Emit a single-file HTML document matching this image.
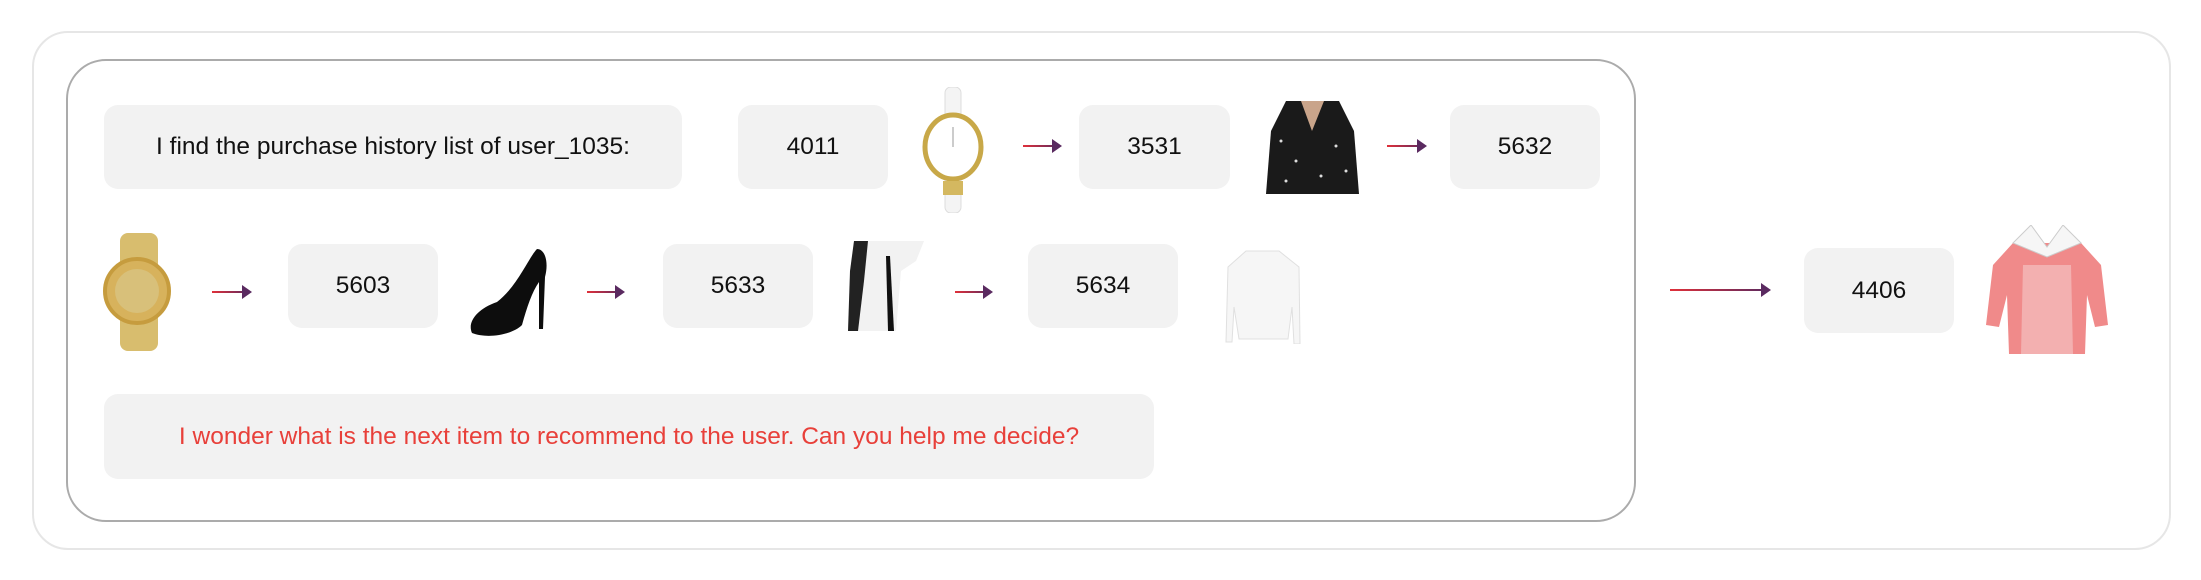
<!DOCTYPE html>
<html><head><meta charset="utf-8"><style>
body{margin:0;width:2201px;height:580px;background:#fff;position:relative;overflow:hidden;font-family:"Liberation Sans",sans-serif}
.a{position:absolute}
.outer{left:32px;top:31px;width:2139px;height:519px;border:2px solid #e6e6e6;border-radius:36px;box-sizing:border-box}
.inner{left:66px;top:59px;width:1570px;height:463px;border:2px solid #ababab;border-radius:40px;box-sizing:border-box}
.b{position:absolute;background:#f2f2f2;border-radius:14px;display:flex;align-items:center;justify-content:center;font-size:24.5px;color:#111}
.ar{position:absolute;height:2px;background:linear-gradient(90deg,#e0303a,#5a2a60)}
.ar:after{content:"";position:absolute;right:-2px;top:-6px;border-left:10px solid #5a2a60;border-top:7px solid transparent;border-bottom:7px solid transparent}
</style></head><body>
<div class="a outer"></div>
<div class="a inner"></div>
<div class="b" style="left:104px;top:105px;width:578px;height:84px">I find the purchase history list of user_1035:</div>
<div class="b" style="left:738px;top:105px;width:150px;height:84px">4011</div>
<svg class="a" style="left:919px;top:87px" width="68" height="126"><rect x="26" y="0" width="16" height="126" rx="6" fill="#f4f4f4" stroke="#ddd"/><ellipse cx="34" cy="60" rx="28" ry="32" fill="#fff" stroke="#c8a848" stroke-width="5"/><line x1="34" y1="60" x2="34" y2="40" stroke="#999"/><rect x="24" y="94" width="20" height="14" fill="#d4b860"/></svg>
<div class="ar" style="left:1023px;top:145px;width:37px"></div>
<div class="b" style="left:1079px;top:105px;width:151px;height:84px">3531</div>
<svg class="a" style="left:1266px;top:101px" width="93" height="93"><path d="M20 0 L73 0 L88 30 L93 93 L0 93 L5 30Z" fill="#1a1a1a"/><path d="M35 0 L46 30 L58 0Z" fill="#c9a48a"/><g fill="#ddd"><circle cx="15" cy="40" r="1.5"/><circle cx="30" cy="60" r="1.5"/><circle cx="70" cy="45" r="1.5"/><circle cx="80" cy="70" r="1.5"/><circle cx="20" cy="80" r="1.5"/><circle cx="55" cy="75" r="1.5"/></g></svg>
<div class="ar" style="left:1387px;top:145px;width:38px"></div>
<div class="b" style="left:1450px;top:105px;width:150px;height:84px">5632</div>

<svg class="a" style="left:102px;top:233px" width="73" height="118"><rect x="18" y="0" width="38" height="118" rx="8" fill="#d8bd6e"/><circle cx="35" cy="58" r="32" fill="#d7b25c" stroke="#c69c3e" stroke-width="4"/><circle cx="35" cy="58" r="22" fill="#d8c07a"/></svg>
<div class="ar" style="left:212px;top:291px;width:38px"></div>
<div class="b" style="left:288px;top:244px;width:150px;height:84px">5603</div>
<svg class="a" style="left:467px;top:247px" width="85" height="90"><path d="M70 2 C62 10 50 40 30 55 C10 62 0 75 5 86 C20 92 45 88 55 78 C60 60 65 45 72 35 L72 82 L76 82 L78 30 C82 15 78 2 70 2Z" fill="#0d0d0d"/></svg>
<div class="ar" style="left:587px;top:291px;width:36px"></div>
<div class="b" style="left:663px;top:244px;width:150px;height:84px">5633</div>
<svg class="a" style="left:846px;top:241px" width="82" height="90"><path d="M8 0 L40 0 L78 0 L70 20 L55 30 L50 90 L2 90 L5 20Z" fill="#f2f2f2"/><path d="M8 0 L22 0 L18 40 L12 90 L2 90 L4 30Z" fill="#222"/><path d="M44 15 L48 90 L42 90 L40 15Z" fill="#111"/></svg>
<div class="ar" style="left:955px;top:291px;width:36px"></div>
<div class="b" style="left:1028px;top:244px;width:150px;height:84px">5634</div>
<svg class="a" style="left:1224px;top:247px" width="77" height="97"><path d="M22 4 L55 4 L75 20 L76 97 L70 97 L68 60 L64 92 L15 92 L10 60 L8 95 L2 95 L4 20Z" fill="#f6f6f6" stroke="#e0e0e0"/></svg>

<div class="b" style="left:104px;top:394px;width:1050px;height:85px;color:#e8403a">I wonder what is the next item to recommend to the user. Can you help me decide?</div>

<div class="ar" style="left:1670px;top:289px;width:99px"></div>
<div class="b" style="left:1804px;top:248px;width:150px;height:85px">4406</div>
<svg class="a" style="left:1983px;top:225px" width="128" height="129"><path d="M30 18 L98 18 L118 40 L125 100 L112 102 L104 70 L102 129 L26 129 L24 70 L16 102 L3 100 L10 40Z" fill="#f08a8a"/><path d="M40 40 L88 40 L90 129 L38 129Z" fill="#f3b0b0"/><path d="M30 18 L48 0 L64 22 L80 0 L98 18 L64 32Z" fill="#f6f6f6" stroke="#ccc"/></svg>
</body></html>
